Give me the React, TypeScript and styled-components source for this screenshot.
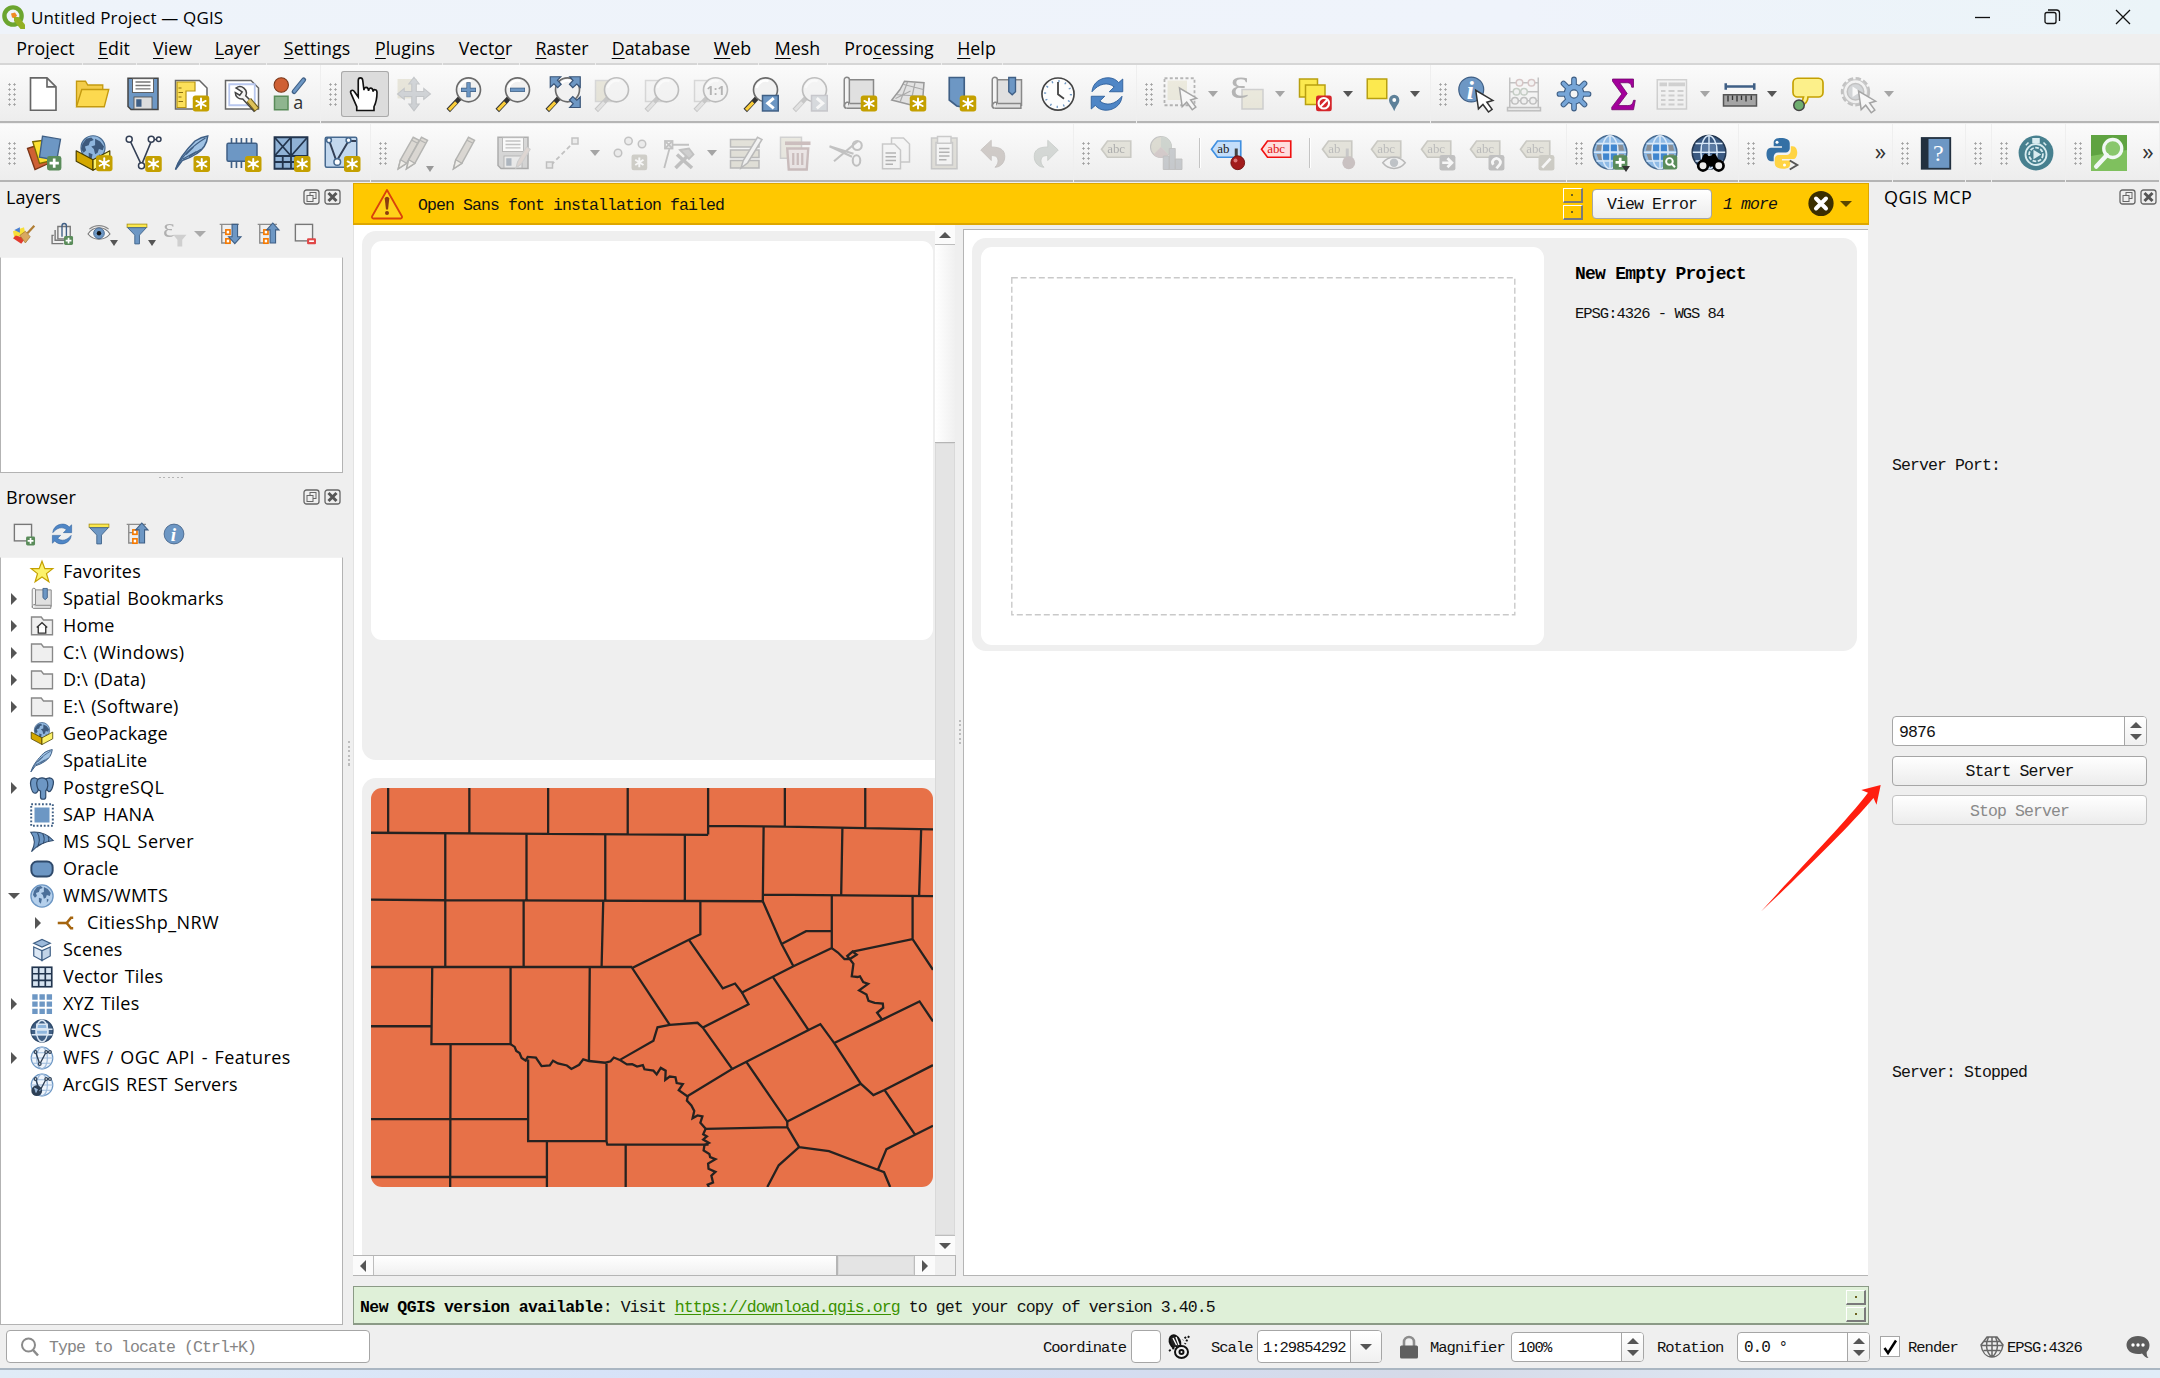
import React from "react";
import styled, { createGlobalStyle, css } from "styled-components";

const Global = createGlobalStyle`
  * { box-sizing: border-box; }
  body { margin: 0; background: #efefef; overflow: hidden; }
  svg { display: block; flex: none; overflow: visible; }
`;

const UI = `"Open Sans", "Noto Sans", "Noto Sans CJK SC", sans-serif`;
const MONO = `"Liberation Mono", "Noto Sans CJK SC", monospace`;

/* ---------- shared text ---------- */

const Mono = styled.span<{ $size?: number; $pitch?: number; $bold?: boolean; $color?: string; $italic?: boolean }>`
  display: inline-block;
  padding-top: 3px;
  font-family: ${MONO};
  font-size: ${(p) => p.$size ?? 16.5}px;
  letter-spacing: ${(p) => (p.$pitch ?? 9) - 0.6 * (p.$size ?? 16.5)}px;
  font-weight: ${(p) => (p.$bold ? 700 : 400)};
  font-style: ${(p) => (p.$italic ? "italic" : "normal")};
  color: ${(p) => p.$color ?? "#111"};
  white-space: pre;
  line-height: 20px;
`;

/* ---------- icon helpers ---------- */

const BLUE = "#6d97c4";
const NAVY = "#3f5f85";

const Star = ({ x = 12.5, y = 13 }: { x?: number; y?: number }) => (
  <g transform={`translate(${x} ${y})`}>
    <rect width="11" height="10.6" rx="1.8" fill="#c4a000" />
    <g stroke="#fff" strokeWidth="1.3" strokeLinecap="round">
      <path d="M5.5 1.9V8.7M2.4 3.6l6.2 3.4M8.6 3.6L2.4 7" />
    </g>
    <circle cx="5.5" cy="5.3" r="1.5" fill="#fff" />
  </g>
);

const Plus = ({ x = 13.5, y = 13.5, s = 1 }: { x?: number; y?: number; s?: number }) => (
  <g transform={`translate(${x} ${y}) scale(${s})`}>
    <rect width="9.6" height="9.6" rx="1.6" fill="#5a8c5a" />
    <path d="M4.8 1.7v6.2M1.7 4.8h6.2" stroke="#fff" strokeWidth="1.8" />
  </g>
);

const Lens = ({ faded = false, children }: { faded?: boolean; children?: React.ReactNode }) => (
  <g>
    <path d="M9.2 14.8L1.5 23" stroke={faded ? "#888" : "#333"} strokeWidth="3.2" />
    <path d="M6.8 17.6L2 22.6" stroke={faded ? "#ccc" : "#fccf3a"} strokeWidth="2" />
    <circle cx="15" cy="9.2" r="8" fill="#f1f1f1" stroke="#6b6b6b" strokeWidth="1.1" />
    <path d="M9 8a6.3 6.3 0 0 1 8-4.6" stroke="#fff" strokeWidth="1.6" fill="none" />
    {children}
  </g>
);

const Cursor = ({ x = 12, y = 9 }: { x?: number; y?: number }) => (
  <path transform={`translate(${x} ${y})`} d="M0 0l1.8 12.4 3-2.9 3.7 5 2.4-1.8-3.5-4.7 4-1.2z" fill="#fff" stroke="#333" strokeWidth="1" />
);

const Book = () => (
  <g stroke="#888" strokeWidth="1">
    <path d="M4.5 2.5H21v17H4.5z" fill="#e0e0e0" />
    <path d="M1.5 2.5a1.7 1.7 0 0 1 3.4 0v15.2a2 2 0 0 0-2 3.8c-1 0-1.9-1-1.4-3z" fill="#f4f4f4" />
    <path d="M3 21.5h17.6v-3.2H5" fill="#e0e0e0" />
  </g>
);

const Tag = ({ fill, stroke, text, color = "#444" }: { fill: string; stroke: string; text: string; color?: string }) => (
  <g transform="translate(0 .5)">
    <path d="M5 3.5h15.5v10.8H5L1 9z" fill={fill} stroke={stroke} strokeWidth="1.1" />
    <text x="4.8" y="11.6" fontFamily="Liberation Serif, serif" fontSize="8.6" fill={color}>
      {text}
    </text>
  </g>
);

const MiniBadge = ({ d, fill = "#888" }: { d: string; fill?: string }) => (
  <g transform="translate(13 13.3)">
    <rect width="10.6" height="10.4" rx="1.6" fill={fill} />
    <path d={d} stroke="#fff" strokeWidth="1.8" fill="none" />
  </g>
);

const Land = ({ c = "#3d5a7d" }: { c?: string }) => (
  <path d="M4 7l3-4 4-1 2 2-3 1-1 3-3 1 1 3-2 2-2-3zM14 3l4 2 3 4-1 3-3-1-1 3-2 1-1-4-2-2 3-1zM9 14l3 1-1 5-2-2zM17 15l2 1-2 3z" fill={c} />
);

const Grid = ({ dark = false }: { dark?: boolean }) => (
  <g fill="none" stroke={dark ? "#22354e" : "#46698f"} strokeWidth="1">
    <circle cx="12" cy="11.5" r="11.2" fill={dark ? "#3b5a82" : "#8fbbe6"} />
    {!dark && <path d="M3.500 6.500h3.700v4H2.500zM17 6.500h3.500l1 4H17zM3 12.600h4v4H4.500zM17 12.600h4.500l-1.500 4H17z" fill="#8a8f95" stroke="none" />}
    <ellipse cx="12" cy="11.5" rx="5.4" ry="11" stroke="#d8e8f8" />
    <path d="M12 .7v21.6M1.2 11.5h21.6M3 5.6h18M3 17.4h18" stroke="#d8e8f8" />
    <path d="M7.4 6.5h4v4.2h-4zM12.600 6.500h4v4.200h-4zM7.400 12.500h4v4h-4zM12.600 12.500h4v4h-4z" fill={dark ? "#5a7aa3" : "#3f86cf"} stroke="none" />
  </g>
);

const Feather = () => (
  <g>
    <path d="M1 23C3 16 8 10 14 4c3-2 6-3 8.5-3.4C22 6 19 10 15 12.5c-3 2-6 3.5-9.500 4.5z" fill="#9fc2e4" stroke="#3f5f85" strokeWidth="1" />
    <path d="M1 23C5 14 11 8 21 2M8 13l5-5M10 14.500l8-5M6 16l9-5" stroke="#3f5f85" strokeWidth=".8" fill="none" />
  </g>
);

const Box3d = () => (
  <g strokeLinejoin="round">
    <circle cx="12" cy="8.500" r="8" fill="#8fb6dd" stroke="#46698f" strokeWidth=".8" />
    <g transform="translate(1.500 0) scale(.85)"><Land /></g>
    <path d="M.8 10.5L12 16.500v7L.8 17.500z" fill="#d4a800" stroke="#4a3f00" strokeWidth=".8" />
    <path d="M23.200 10.500L12 16.500v7l11.200-6z" fill="#fcf26a" stroke="#4a3f00" strokeWidth=".8" />
  </g>
);

const Refresh = () => (
  <g fill="#4f86c6" stroke="#2e5f9b" strokeWidth=".6">
    <path d="M2 10.500C2.300 4.500 8 .8 13.500 1.200c2.600.2 4.800 1.400 6.300 3.200L22.500 2v8.500h-9L16.800 7.300C12.500 3.700 6.500 5 2 10.500z" />
    <path d="M22 13.500c-.3 6-6 9.700-11.500 9.300-2.600-.2-4.800-1.400-6.300-3.200L1.500 22v-8.500h9l-3.300 3.200c4.300 3.600 10.300 2.300 14.800-3.200z" />
  </g>
);

const Pencil = ({ x = 0 }: { x?: number }) => (
  <g transform={`translate(${x} 0)`}>
    <path d="M3 22.500l1.500-6L13 1.500l4 2L8.500 19z" fill="#b9ad98" stroke="#55554c" strokeWidth="1" />
    <path d="M4.500 16.500l4 2.300L3 22.500zM12 3.500l4 2" fill="#efe9d8" stroke="#55554c" strokeWidth=".9" />
  </g>
);

const Floppy = ({ c = BLUE }: { c?: string }) => (
  <g>
    <path d="M2 1.500h20v20.800H4L2 20.300z" fill={c} stroke="#444" strokeWidth="1" />
    <rect x="5" y="1.800" width="14" height="9.200" fill="#fff" stroke="#555" strokeWidth=".6" />
    <path d="M7 4h10M7 6.300h10M7 8.600h10" stroke="#777" strokeWidth=".9" />
    <rect x="6" y="14" width="12" height="8" fill="#ddd" stroke="#555" strokeWidth=".6" />
    <rect x="7.500" y="15.500" width="3.500" height="5" fill="#3f5f85" />
  </g>
);

const Funnel = () => (
  <g>
    <rect x=".8" y=".8" width="14.400" height="2.400" fill="#fce94f" stroke="#a89010" strokeWidth=".6" />
    <path d="M1.200 3.400h13.600L9.800 8.800v6.400H6.400V8.800z" fill={BLUE} stroke="#46698f" strokeWidth=".7" />
  </g>
);

const TreeGlyph = ({ up }: { up: boolean }) => (
  <g>
    <path d="M.5 1h14M2 1v13.500h4M2 7h3" stroke="#8c8c8c" strokeWidth="1" fill="none" />
    <rect x="5" y="5" width="3" height="3.200" fill="#fff" stroke="#f57900" strokeWidth="1.200" />
    <rect x="5" y="11.500" width="3" height="3.200" fill="#fff" stroke="#f57900" strokeWidth="1.200" />
    <path d={up ? "M11.500 0l4.500 5h-2.500v9.500h-4V5H7z" : "M11.500 15l4.500-5h-2.500V1h-4v9H7z"} fill={BLUE} stroke="#3f5f85" strokeWidth=".8" />
  </g>
);

const Folder = () => <path d="M1 2h6.500l1.500 2h6v9.800H1z" fill="#efefef" stroke="#888" strokeWidth=".9" />;

const VGlobe = () => (
  <g fill="none" strokeWidth=".8">
    <circle cx="8" cy="8" r="7.200" fill="#eef4fb" stroke="#6d97c4" />
    <ellipse cx="8" cy="8" rx="3.600" ry="7.200" stroke="#9dbadb" />
    <path d="M.8 8h14.400M2 4.500h12M2 11.500h12" stroke="#9dbadb" />
    <path d="M3.800 4.200L6.500 12 10.500 4.500M11 4h2.500" stroke="#2d3f55" strokeWidth=".9" />
    <g fill="#fff" stroke="#2d3f55"><circle cx="3.700" cy="4" r=".9" /><circle cx="6.500" cy="12" r=".9" /><circle cx="10.800" cy="4" r=".9" /><circle cx="13.300" cy="4" r=".9" /></g>
  </g>
);

/* 24-unit drawings for the main toolbars */
const icons: Record<string, React.ReactNode> = {
  newFile: <path d="M3.500 1.200h11l6 6v15.600h-17zM14.500 1.200v6h6" transform="translate(-.5 0)" fill="#fff" stroke="#666" strokeWidth="1.100" />,
  open: <g stroke="#c49a10" strokeWidth=".9"><path d="M1 20V3.500h6l1.500 2.500h10V9" fill="#f3cc4a" /><path d="M1 20.500l3.500-11.500h18l-3 11.500z" fill="#fcd94f" /></g>,
  save: <Floppy />,
  newLayout: <g><path d="M1 3h16l5 5v14H1z" fill="#fff" stroke="#666" /><path d="M2 4h12v6H8v11H2z" fill="#fce05a" stroke="#b89510" strokeWidth=".8" /><path d="M3 8h2M3 11h3M3 14h2M3 17h3" stroke="#8a7010" strokeWidth=".8" /><Star /></g>,
  layoutMgr: <g><path d="M1 3h17l5 5v14H1z" fill="#fff" stroke="#666" /><path d="M3.500 5.500h17v14h-17z" fill="none" stroke="#b9c8ef" strokeWidth="1.200" /><path d="M8 8a4.300 4.300 0 0 1 6.500 5.200l8 8-2.500 2.300-7.500-8.200A4.300 4.300 0 0 1 7.500 11l3 1.800 1.600-2.200z" fill="#f4f4f4" stroke="#444" strokeWidth="1" /><path d="M16.500 16l5.500 6.500" stroke="#6d5b1c" strokeWidth="4" /><path d="M16.500 16l5.200 6.200" stroke="#ddc15a" strokeWidth="2.600" /></g>,
  style: <g><circle cx="5.500" cy="6" r="4.800" fill="#cf6034" stroke="#7a3517" strokeWidth=".7" /><path d="M14 10.500L20.500 2.500" stroke="#3f5f85" strokeWidth="3.200" strokeLinecap="round" /><path d="M14.200 10.300L20.300 2.700" stroke={BLUE} strokeWidth="1.800" strokeLinecap="round" /><rect x="1" y="13.500" width="9" height="9" fill="#8fb58f" stroke="#5a8c5a" /><text x="13.500" y="22.300" fontFamily="Open Sans, sans-serif" fontSize="12" fill="#333">a</text></g>,
  hand: <path d="M7.500 14L5 10.500c-1.200-1.800-3-.8-2.500.8l4 9.200V23h11.500v-2.500c1.500-3 2-5 2-9.500 0-2.400-2.400-2.400-2.600-.5 0-3-2.900-3.200-3-.6-.2-3-3-3-3.100-.4L10.500 3c-.2-2.300-3-2.300-3 0z" fill="#fff" stroke="#111" strokeWidth="1.100" />,
  pan: <g><rect x="1" y="2" width="13" height="13" fill="#d5cda0" /><path d="M12 .8l3.500 4.500h-2v5h5v-2L23 12l-4.500 3.600v-2h-5v5h2L12 23.200l-3.500-4.600h2v-5h-5v2L1 12l4.500-3.700v2h5v-5h-2z" fill="#97a3af" stroke="#7a858f" strokeWidth=".7" /></g>,
  zoomIn: <Lens><path d="M15 4.200v10M10 9.200h10" stroke={NAVY} strokeWidth="2.800" /><path d="M15 4.600v9.200M10.400 9.200h9.200" stroke={BLUE} strokeWidth="1.800" /></Lens>,
  zoomOut: <Lens><path d="M10 9.200h10" stroke={NAVY} strokeWidth="2.800" /><path d="M10.400 9.200h9.200" stroke={BLUE} strokeWidth="1.800" /></Lens>,
  zoomFull: <g><Lens /><g fill={BLUE} stroke="#3a5578" strokeWidth=".8"><path d="M3.500.5h7L8.300 2.800l2.500 2.700-2.300 2.200L6 5.200 3.500 7.500zM23.500.5v7L21.200 5.300l-2.700 2.500-2.200-2.300L18.700 3 16.500.5zM23.500 21v-7l-2.300 2.200-2.700-2.500-2.200 2.300 2.500 2.500-2.300 2.500z" /></g></g>,
  zoomSel: <g><rect x="1" y="3" width="13" height="14" fill="#d5cda0" stroke="#aaa" /><Lens faded /></g>,
  zoomLayer: <g><rect x="1" y="3" width="13" height="14" fill="#eee" stroke="#aaa" /><Lens faded /></g>,
  zoomNative: <g><rect x="1" y="3" width="10" height="14" fill="#eee" stroke="#aaa" /><Lens faded><text x="9" y="12.500" fontFamily="Open Sans, sans-serif" fontWeight="700" fontSize="8.500" fill="#555">1:1</text></Lens></g>,
  zoomLast: <g><Lens /><rect x="13" y="13" width="10.500" height="10.300" fill={BLUE} stroke={NAVY} /><path d="M20.500 14.800l-4 3.400 4 3.400" stroke="#fff" strokeWidth="2" fill="none" /></g>,
  zoomNext: <g><Lens faded /><rect x="13" y="13" width="10.500" height="10.300" fill="#aab8c6" stroke="#889" /><path d="M16.500 14.800l4 3.400-4 3.400" stroke="#fff" strokeWidth="2" fill="none" /></g>,
  mapView: <g><Book /><Star /></g>,
  view3d: <g><path d="M6 9l3-5.500 13 1-1 13-7 2L.5 16z" fill="#e2e2e2" stroke="#999" /><path d="M4 12.500l17 1M8 5.500l13.500 3.500M11 4L6 17.500M16 4.500l-3 14M3 15l10-5" stroke="#aaa" strokeWidth=".8" fill="none" /><Star /></g>,
  bookmarkNew: <g><path d="M5.500 1h10v20l-5-1-5-4z" fill={BLUE} stroke={NAVY} strokeWidth="1.100" /><Star /></g>,
  bookmarks: <g><Book /><path d="M12.500 1H17v9.500l-2.200 2-2.300-2z" fill={BLUE} stroke={NAVY} strokeWidth=".9" /></g>,
  clock: <g><circle cx="12" cy="12" r="10.700" fill="#fdfdfd" stroke="#444" strokeWidth="1.100" /><circle cx="12" cy="12" r="8.600" fill="none" stroke={BLUE} strokeWidth="1.400" strokeDasharray=".9 3.600" /><path d="M12 4v8.200l4 3" stroke="#444" strokeWidth="1.200" fill="none" /></g>,
  refresh: <Refresh />,
  select: <g><rect x="3" y="3" width="13" height="13" fill="#e0d9a6" /><rect x="1" y="1.500" width="20" height="18" fill="none" stroke="#555" strokeWidth="1.200" strokeDasharray="2 1.500" /><Cursor x={11} y={8} /></g>,
  epsilon: <g><rect x="8" y="9" width="14" height="13" fill="#e0d9a6" stroke="#999" /><text x="0" y="14.500" fontFamily="Liberation Serif, serif" fontSize="30" fill="#555">ε</text></g>,
  deselect: <g><rect x="1" y="2" width="12" height="12" fill="#fce94f" stroke="#b8a010" /><rect x="5" y="6" width="13" height="13" fill="#fce94f" stroke="#b8a010" /><rect x="12" y="13" width="10.500" height="10.500" rx="1.500" fill="#d5252a" /><circle cx="17.200" cy="18.200" r="3.500" fill="none" stroke="#fff" strokeWidth="1.400" /><path d="M19.500 15.800l-4.700 4.800" stroke="#fff" strokeWidth="1.400" /></g>,
  selectLoc: <g><rect x="1.500" y="2" width="13" height="13" fill="#fce94f" stroke="#b8a010" /><path d="M19.500 23.500c-1.500-4-3.500-5-3.500-7.500a3.400 3.400 0 0 1 6.900 0c0 2.500-2 3.500-3.400 7.500z" fill="#5e8199" /><circle cx="19.500" cy="16" r="1.300" fill="#fff" /></g>,
  identify: <g><circle cx="9.500" cy="9" r="8.300" fill={BLUE} stroke={NAVY} strokeWidth=".8" /><text x="6.500" y="15" fontFamily="Liberation Serif, serif" fontStyle="italic" fontWeight="700" fontSize="17" fill="#fff">i</text><Cursor x={12.500} y={9.500} /></g>,
  abacus: <g fill="none" stroke="#777"><path d="M2.500 1v20.500M21.500 1v20.500M2 4.500h20M2 10.500h20M2 16.500h20" /><rect x="1" y="21" width="22" height="2.200" fill="#ddd" /><g fill="#eee"><circle cx="9" cy="4.500" r="2.200" stroke="#b77" /><circle cx="17" cy="4.500" r="2.200" stroke="#b77" /><circle cx="7" cy="10.500" r="2.200" stroke="#797" /><circle cx="12" cy="10.500" r="2.200" stroke="#797" /><circle cx="6" cy="16.500" r="2.200" /><circle cx="12" cy="16.500" r="2.200" /><circle cx="18" cy="16.500" r="2.200" /></g></g>,
  gear: <g><g stroke={NAVY} strokeWidth="3.800" strokeLinecap="round"><path d="M12 2.300v19.400M2.300 12h19.400M5 5l14 14M19 5L5 19" /></g><circle cx="12" cy="12" r="7" fill={NAVY} /><g stroke="#77a6d8" strokeWidth="2.400" strokeLinecap="round"><path d="M12 2.300v19.400M2.300 12h19.400M5 5l14 14M19 5L5 19" /></g><circle cx="12" cy="12" r="6.300" fill="#77a6d8" /><circle cx="12" cy="12" r="2.700" fill="#f4f4f4" stroke={NAVY} strokeWidth=".8" /></g>,
  sigma: <path d="M5 2h14v5.500h-1.200c-.4-2.500-1.300-3-3.500-3H9.800l5 7.200-6 8h6.400c2.500 0 3.200-1 3.800-3.500h1.200L19 22.500H4.500v-1.700l6.700-8.800L5 3.500z" fill="#a3009b" stroke="#6b0066" strokeWidth=".5" />,
  table: <g><rect x="1.500" y="2.500" width="19.500" height="19.500" fill="#eee" stroke="#999" /><path d="M3 5.500h5M9 5.500h11" stroke="#999" strokeWidth="2.500" /><path d="M4 10h3M9 10h4M15 10h4M4 13h3M9 13h4M15 13h4M4 16h3M9 16h4M15 16h4M4 19h3M9 19h4M15 19h4" stroke="#999" strokeWidth="1.200" /></g>,
  measure: <g><path d="M2.500 7h19M2.500 4.800v4.400M21.500 4.800v4.400" stroke="#3f5f85" strokeWidth="1.700" /><rect x="1" y="12.500" width="22" height="7.500" fill="#a5a5a5" stroke="#555" /><path d="M4 13v4M7 13v3M10 13v4M13 13v3M16 13v4M19.500 13v3" stroke="#333" strokeWidth=".9" /></g>,
  tips: <g><path d="M5 1.500h14a3 3 0 0 1 3 3V11a3 3 0 0 1-3 3h-7c0 3-2 5-5 6.500L9 14H5a3 3 0 0 1-3-3V4.500a3 3 0 0 1 3-3z" fill="#fcf08a" stroke="#c4a000" strokeWidth="1.100" /><circle cx="6" cy="19.500" r="3.500" fill="#6fae6f" stroke="#444" /></g>,
  runAction: <g><circle cx="11" cy="10.500" r="8.700" fill="#e9e9e9" stroke="#777" strokeWidth="2.200" strokeDasharray="3.500 1.600" /><circle cx="11" cy="10.500" r="8" fill="#eee" stroke="#888" strokeWidth=".8" /><circle cx="11" cy="10.500" r="5.500" fill="#9fa9b2" stroke="#777" /><path d="M9 7l5.500 3.500L9 14z" fill="#fff" /><Cursor x={13} y={10} /></g>,

  dataSource: <g strokeWidth=".9"><path d="M1 9l9-3 5 13-9 4z" fill="#cf6034" stroke="#7a3517" /><path d="M4.500 4.500l11-1.500 2 14-8.500 2z" fill="#fce02f" stroke="#7d6a00" /><path d="M11 .8l12 2-2.500 14-11.500-2z" fill={BLUE} stroke={NAVY} /><Plus x={14} y={14} /></g>,
  newGpkg: <g><Box3d /><Star x={14} y={13.500} /></g>,
  newShp: <g fill="none" stroke="#333f55"><path d="M3 3l8 17L18 3h4" strokeWidth="1.100" /><g fill="#fff"><circle cx="2.800" cy="2.800" r="2" /><circle cx="11" cy="20.500" r="2" /><circle cx="17.500" cy="2.800" r="2" /><circle cx="22.500" cy="2.800" r="1.500" /></g><g stroke="none"><Star x={13.500} y={14} /></g></g>,
  newLite: <g><Feather /><Star x={13} y={14} /></g>,
  newMem: <g><path d="M5 2v20M8.300 2v20M11.600 2v20M15 2v20M18.300 2v20" stroke="#3f5f85" strokeWidth="1.100" /><rect x="2" y="5.500" width="20" height="12" rx="1" fill={BLUE} stroke={NAVY} /><Star x={14} y={14} /></g>,
  newMesh: <g stroke="#22354e" strokeWidth="1.200"><path d="M1 1.500h22v21H1z" fill="#8fb2d6" /><path d="M12 1.500v21M1 14h22M1 1.500L12 14M12 1.500L1 14M23 1.500L12 14M1 18h22M6.500 14v8.500" fill="none" /><g stroke="none"><Star x={14} y={14} /></g></g>,
  newVirt: <g stroke="#46698f"><rect x="1.500" y="1.500" width="21" height="20" rx="1" fill="#c3d8ee" /><path d="M4 3.500l5 14 8-13.500M17 4h5" fill="none" stroke="#333f55" strokeWidth="1.300" /><g fill="#fff"><circle cx="4" cy="3.500" r="1.600" /><circle cx="9.500" cy="18" r="2.200" /><circle cx="17" cy="3.500" r="1.600" /></g><g stroke="none"><Star x={14} y={14} /></g></g>,
  edits: <g><Pencil x={-1.500} /><Pencil x={4} /></g>,
  edit: <Pencil x={2} />,
  saveEdits: <g><Floppy c="#aaa" /><path d="M14 22l1-4 6-10 2.500 1.500-6 10z" fill="#c9a898" stroke="#999" strokeWidth=".7" /></g>,
  digitize: <g><path d="M4 20L20 4" stroke="#777" strokeWidth="1.200" strokeDasharray="3 2" /><rect x="1" y="18" width="4" height="4" fill="#ddd" stroke="#777" /><rect x="18" y="2" width="4" height="4" fill="#ddd" stroke="#777" /></g>,
  addPts: <g><g fill="#ddd" stroke="#777"><circle cx="4" cy="12" r="2.500" /><circle cx="11" cy="4" r="2.500" /><circle cx="20" cy="6" r="2.500" /></g><rect x="13" y="13" width="10.500" height="10.500" rx="1.500" fill="#9d9880" /><path d="M18.200 15v6.500M15.500 16.500l5.500 3.500M21 16.500L15.500 20" stroke="#fff" strokeWidth="1.300" /></g>,
  vertex: <g stroke="#777" fill="none" strokeWidth="1.200"><rect x="2" y="4" width="5" height="5" /><path d="M7 6.500h11M5 9L1.500 22M2 4l5 5M7 4L2 9" /><path d="M9 22l9-9M10 13l10 9" strokeWidth="2.400" /><path d="M12 10l6-1 3 4-3 3z" fill="#999" /></g>,
  multiEdit: <g><path d="M1 3h19v5H1zM1 10h19v5H1zM1 17h19v5H1z" fill="#c9c2a2" stroke="#666" /><path d="M8 22l1.500-5L19 1.500l3 1.500-9.500 15.500z" fill="#eee" stroke="#666" /></g>,
  trash: <g><rect x="1" y="1.500" width="14" height="14" fill="#d8d2b4" stroke="#999" /><path d="M4 5.500h17" stroke="#a06868" strokeWidth="2.400" /><path d="M5.500 9h14l-1 14h-12z" fill="#e5cfcf" stroke="#a06868" strokeWidth="1.600" /><path d="M9.500 12v8M12.500 12v8M15.500 12v8" stroke="#a06868" strokeWidth="1.500" /></g>,
  cut: <g fill="none" stroke="#777" strokeWidth="1.400"><path d="M1 7.500l16 5M4 17.500L20 4M1 7.500l15 7" /><ellipse cx="19.500" cy="7" rx="3" ry="3" /><ellipse cx="19" cy="17" rx="2.500" ry="3.500" /></g>,
  copy: <g fill="#f4f4f4" stroke="#888"><path d="M9 2h8l4 4v12H9z" /><path d="M3 6h8l4 4v12.500H3z" /><path d="M5 12h7M5 14.500h7M5 17h7M5 19.500h5" stroke="#555" /></g>,
  paste: <g stroke="#888"><rect x="3" y="2" width="17" height="20.500" fill="#c4bfa8" /><rect x="6" y="5" width="11" height="15" fill="#f4f4f4" /><rect x="7" y="1" width="9" height="4.500" fill="#eee" /><path d="M8 9h7M8 11.500h7M8 14h7M8 16.500h5" stroke="#555" /></g>,
  undo: <path d="M2.500 10L9.500 3.500V8c7 0 9 2.500 9 6.500s-3 7-6.500 7c1.500-1.500 2.200-3 2-4.700-.2-2.300-1.500-3.100-4.500-3.100V17z" fill="#a08d80" stroke="#8a7a70" strokeWidth=".6" />,
  redo: <path d="M21.500 10L14.500 3.500V8c-7 0-9 2.500-9 6.500s3 7 6.500 7c-1.500-1.500-2.200-3-2-4.700.2-2.300 1.500-3.100 4.500-3.100V17z" fill="#a0b0a4" stroke="#86968a" strokeWidth=".6" />,
  label: <Tag fill="#cbc6a6" stroke="#8f8c74" text="abc" />,
  diagram: <g><circle cx="8" cy="8" r="7" fill="#b9b48e" stroke="#777" strokeWidth=".7" /><path d="M8 8V1A7 7 0 0 1 13 13z" fill="#8fa48f" /><path d="M8 8l5 5a7 7 0 0 1-10 0z" fill="#b08a8a" /><path d="M9.500 14v9h4v-9zM13.500 9v14h4V9zM17.500 16v7h4.500v-7z" fill="#84909c" stroke="#777" strokeWidth=".6" /></g>,
  pinned: <g><Tag fill="#c4defa" stroke="#3f8fe0" text="ab" color="#222" /><path d="M17.500 9v7" stroke="#444" strokeWidth="2" /><circle cx="18.500" cy="18.500" r="4.600" fill="#a21c1c" stroke="#701010" strokeWidth=".6" /><circle cx="17" cy="17" r="1.300" fill="#d77" /></g>,
  unplaced: <Tag fill="#ffdede" stroke="#f01010" text="abc" color="#e01515" />,
  pinGrey: <g><Tag fill="#cbc6a6" stroke="#8a8870" text="ab" color="#666" /><path d="M17.500 9v7" stroke="#888" strokeWidth="2" /><circle cx="18.500" cy="18.500" r="4.300" fill="#977" /></g>,
  eyeGrey: <g><Tag fill="#cbc6a6" stroke="#8a8870" text="abc" color="#666" /><path d="M8.500 18.500c4-5 11-5 15 0-4 5-11 5-15 0z" fill="#f5f5f5" stroke="#666" /><circle cx="16" cy="18.500" r="2.800" fill="#6f7f8f" /></g>,
  moveGrey: <g><Tag fill="#cbc6a6" stroke="#8a8870" text="abc" color="#666" /><MiniBadge d="M1.800 5.200h6M5.300 2.200l3 3-3 3" fill="#777" /></g>,
  rotGrey: <g><Tag fill="#cbc6a6" stroke="#8a8870" text="abc" color="#666" /><MiniBadge d="M3.200 6.500a2.600 2.600 0 1 1 4.200 0L5.300 9" fill="#777" /></g>,
  editGrey: <g><Tag fill="#cbc6a6" stroke="#8a8870" text="abc" color="#666" /><MiniBadge d="M2.500 8.500l5.500-6" fill="#9a9478" /></g>,
  globeAdd: <g><Grid /><Plus x={14} y={13.500} /></g>,
  globeFind: <g><Grid /><rect x="14" y="13.500" width="9.500" height="9.500" rx="1.500" fill="#5a8c5a" /><circle cx="18.300" cy="17.600" r="2.200" fill="none" stroke="#fff" strokeWidth="1.300" /><path d="M20 19.300l2 2.200" stroke="#fff" strokeWidth="1.400" /></g>,
  binoculars: <g><Grid dark /><path d="M5 21l3-7c.5-2 3-2 3.500 0h2c.5-2 3-2 3.500 0l4 7z" fill="#000" /><circle cx="8" cy="20.500" r="3.200" fill="#eee" stroke="#000" strokeWidth="1.800" /><circle cx="18.500" cy="20.500" r="3.200" fill="#eee" stroke="#000" strokeWidth="1.800" /></g>,
  python: <g><path d="M10.500 2C6 2 5.800 4 5.800 5.500v2h5.500v1H4C1.500 8.500 1 11 1 13s1 4.500 3 4.500h1.800v-2.800c0-1.800 1.200-3 3-3h5c1.500 0 2.700-1.200 2.700-2.700V5.500C16.500 3 14 2 10.500 2z" fill="#3470a5" /><circle cx="8" cy="4.800" r="1" fill="#fff" /><path d="M12 22.500c4 0 4.800-1.500 4.800-3.500v-2h-5.500v-1h7.500c2 0 2.700-2.500 2.700-4.200 0-2-1-4.300-3-4.300h-1.300v2.800c0 1.800-1.200 3-3 3h-5C7.500 13.300 6.500 14.700 6.500 16v3c0 2.300 2 3.500 5.500 3.500z" fill="#ffd444" /><circle cx="13" cy="20" r="1" fill="#fff" /><path d="M16.500 17l5 3-5 3" stroke="#555" strokeWidth="1.300" fill="none" /></g>,
  help: <g><rect x="2.500" y="2" width="19" height="20.500" fill={BLUE} stroke="#22303f" strokeWidth="1.200" /><rect x="2.500" y="2" width="4.500" height="20.500" fill="#22303f" /><text x="10" y="17.500" fontFamily="Liberation Serif, serif" fontSize="16" fill="#fff">?</text></g>,
  timer: <g><circle cx="12" cy="12" r="11.600" fill="#47808f" /><circle cx="12" cy="13" r="7" fill="none" stroke="#d9ecf0" strokeWidth="1.200" /><circle cx="12" cy="13" r="4.600" fill="none" stroke="#d9ecf0" strokeWidth="1.200" strokeDasharray="2.500 1" /><path d="M10.800 10.700l3.700 2.300-3.700 2.300zM10 2.500h4v2.500h-4zM17 5l1.800 1.800M7 5L5.200 6.800" fill="#d9ecf0" stroke="#d9ecf0" /></g>,
  finder: <g><rect x="0" y="0" width="24" height="24" fill="#7fc05e" /><path d="M0 0h24v10L0 14z" fill="#5fa341" /><circle cx="14.500" cy="9" r="6" fill="#89c76c" stroke="#f1f8f4" strokeWidth="2.200" /><path d="M10.500 13.500L3.500 21" stroke="#f1f8f4" strokeWidth="3" strokeLinecap="round" /></g>,
};

/* 16-unit drawings for docks and the browser tree */
const small: Record<string, React.ReactNode> = {
  brush: <g><path d="M0 6l8-3 1 5-8 3z" fill="#f7df3a" /><path d="M0 11l6 4 3-4-7-2z" fill="#e23b2e" /><path d="M1 5l4-2v4z" fill="#4a7fd0" /><path d="M5 9l4-3 3.500 4L9 14.500z" fill="#d9a860" stroke="#a0752f" strokeWidth=".5" /><path d="M10.500 7.500L15.500 2" stroke="#b07d33" strokeWidth="1.600" /></g>,
  addGroup: <g fill="none" stroke="#777"><path d="M2 9H.8v6H9M3 5v7.500h8" /><path d="M5 2.500h9v9H5z" fill="#f2f2f2" /><path d="M8 10V2a1.600 1.600 0 0 1 3.200 0v7.500" stroke={NAVY} /><g stroke="none"><Plus x={9.500} y={9.500} s={0.68} /></g></g>,
  eye: <g><path d="M0 8c4-6 12-6 16 0-4 5-12 5-16 0z" fill="#f7f7f7" stroke="#777" strokeWidth=".8" /><circle cx="8" cy="7.500" r="3.900" fill={BLUE} stroke={NAVY} strokeWidth=".6" /><circle cx="8" cy="7.500" r="1.600" fill="#111" /><path d="M1 4.500C5 1 11 1 15 4.500" stroke="#888" strokeWidth=".8" fill="none" /></g>,
  funnel: <Funnel />,
  epsFilter: <g opacity=".45"><text x="0" y="10" fontFamily="Liberation Serif, serif" fontSize="20" fill="#666">ε</text><path d="M8.500 9h7.500l-2.500 3v4.500h-2.500V12z" fill="#aaa" stroke="#aaa" /></g>,
  expand: <TreeGlyph up={false} />,
  collapse: <TreeGlyph up />,
  removeLayer: <g><rect x="1" y="1" width="12.500" height="12" fill="#f4f4f4" stroke="#777" /><rect x="9.500" y="11" width="6.500" height="4.500" rx=".8" fill="#e04848" /><path d="M11 13.200h3.500" stroke="#fff" strokeWidth="1.200" /></g>,
  addLayer: <g><rect x="1" y="1" width="12.500" height="12" fill="#f4f4f4" stroke="#777" /><Plus x={9.500} y={9.800} s={0.68} /></g>,
  refresh: <g transform="scale(.667)"><Refresh /></g>,
  info: <g><circle cx="8" cy="8" r="7.200" fill={BLUE} stroke={NAVY} strokeWidth=".6" /><text x="5.600" y="12.800" fontFamily="Liberation Serif, serif" fontStyle="italic" fontWeight="700" fontSize="14" fill="#fff">i</text></g>,
  star: <path d="M8 .8l1.900 5h5.300l-4.200 3.300 1.600 5.400L8 11.300l-4.600 3.200L5 9.100.8 5.800h5.300z" fill="#fcf26a" stroke="#c4a000" strokeWidth=".8" />,
  bookmarks: <g transform="translate(.5 .3) scale(.65)"><Book /><path d="M12.500 1H17v9.500l-2.200 2-2.300-2z" fill={BLUE} stroke={NAVY} strokeWidth=".9" /></g>,
  home: <g><Folder /><path d="M4.500 9L8 5.800 11.500 9M5.500 8.500v4.200h5V8.500" fill="#fff" stroke="#333" strokeWidth=".9" /></g>,
  folder: <Folder />,
  gpkg: <g transform="translate(.3 0) scale(.64)"><Box3d /></g>,
  feather: <g transform="scale(.66)"><Feather /></g>,
  elephant: <g fill={BLUE} stroke="#2f4a6b" strokeWidth=".8"><path d="M3 1.200C.5 1.200.1 3.700.5 6.500c.4 2.500 1.500 5 2.800 5S5.500 9.500 5.500 9.500L6 2.500zM13 1.200c2.500 0 2.900 2.500 2.500 4.300-.5 2.500-1.800 5-3 5L10 8V2z" /><path d="M5 2.500C6.500 .8 9.500 .8 11 2.500c1.500 2 1 6-.5 7.500v4c0 1-.8 1.500-1.800 1.500S7 15 7 14v-4C4.500 9.500 4 4.500 5 2.500z" /></g>,
  hana: <g><rect x="3" y="3" width="10" height="10" fill={BLUE} /><rect x=".8" y=".8" width="14.400" height="14.400" fill="none" stroke={NAVY} strokeWidth="1.300" strokeDasharray="1.200 1.200" /></g>,
  mssql: <path d="M.5 1.500c5-.5 11 1 15 5.500-5 .5-10 2.500-14.500 7.500C3.500 10 3.500 5.500.5 1.500zM5 2c1.500 2.500 1.500 6 0 9.500M8.500 2.700c1.300 2 1.300 4 .3 6.500M12 4.300c.8 1.200.8 2.200.3 3.400" fill={BLUE} stroke="#2f4a6b" strokeWidth=".7" />,
  oracle: <rect x=".9" y="3" width="14.200" height="10" rx="3.800" fill={BLUE} stroke="#2f4a6b" strokeWidth="1.300" />,
  wms: <g><circle cx="8" cy="8" r="7.400" fill="#b5d0ec" stroke="#6d97c4" strokeWidth=".9" /><g transform="scale(.66)"><Land c="#4b6f99" /></g></g>,
  plug: <g stroke="#a5650f" strokeWidth="1.700" fill="none"><path d="M2.500 8h6" /><path d="M12.800 4.500h-1.500L8.500 8l2.800 3.500h1.500" /></g>,
  scenes: <g stroke="#3f5f85" strokeWidth=".8"><path d="M2.500 6L8 8.500V15L2.500 12z" fill="#dbe7f4" /><path d="M13.500 6L8 8.500V15l5.500-3z" fill="#c2d4e8" /><path d="M2.500 3.500L8 1l5.500 2.500L8 6z" fill="#9dbadb" /></g>,
  vtiles: <g stroke="#22354e" strokeWidth="1.100"><rect x="1.500" y="1.500" width="13" height="13" fill="#d7e4f1" /><path d="M5.800 1.500v13M10.200 1.500v13M1.500 5.800h13M1.500 10.200h13" /></g>,
  xyz: <path d="M1.500 1.500h3.600v3.600H1.500zM6.300 1.500h3.600v3.600H6.300zM11.100 1.500h3.600v3.600h-3.600zM1.500 6.300h3.600v3.600H1.500zM6.300 6.300h3.600v3.600H6.300zM11.100 6.300h3.600v3.600h-3.600zM1.500 11.100h3.600v3.600H1.500zM6.300 11.100h3.600v3.600H6.300zM11.100 11.100h3.600v3.600h-3.600z" fill={BLUE} />,
  wcs: <g fill="none" stroke="#2f4a6b" strokeWidth=".9"><circle cx="8" cy="8" r="7.300" fill="#3f5f85" /><path d="M4.500 3.500h7v3h-7zM4 7.300h8v3H4z" fill="#8fb6dd" stroke="#dbe7f4" /><ellipse cx="8" cy="8" rx="3.800" ry="7.200" stroke="#dbe7f4" /><path d="M1 6.800h14M1 10.500h14" stroke="#dbe7f4" /></g>,
  wfs: <VGlobe />,
  arcgis: <g><VGlobe /><circle cx="4.500" cy="11.800" r="3.600" fill="#2d3f55" /><path d="M3 10l2 1-1 2zM6 12l1.500-1" fill="#9dbadb" stroke="#9dbadb" strokeWidth=".5" /></g>,
};

/* ---------- title bar and menu ---------- */

const Window = styled.div`
  width: 2160px;
  height: 1378px;
  display: flex;
  flex-direction: column;
  background: #efefef;
  font-family: ${UI};
  color: #000;
  position: relative;
`;

const TitleBar = styled.header`
  height: 34px;
  flex: none;
  display: flex;
  align-items: center;
  gap: 6px;
  padding-left: 2px;
  background: linear-gradient(90deg, #eef3fa, #eff3fb 70%, #ebf4f8);
`;

const TitleText = styled.span`
  font-size: 17px;
  letter-spacing: 0.15px;
  flex: 1;
`;

const WinControls = styled.div`
  display: flex;
  svg { margin-right: 48px; }
  svg:nth-child(2) { margin-right: 53px; }
  svg:last-child { margin-right: 28px; }
`;

const MenuBar = styled.nav`
  height: 31px;
  flex: none;
  display: flex;
`;

const MenuItem = styled.div<{ $w: number }>`
  width: ${(p) => p.$w - 1}px;
  margin-right: 1px;
  padding-left: 9px;
  border-bottom: 2px solid #d6d6d6;
  display: flex;
  align-items: center;
  justify-content: center;
  font-size: 17.800px;
  letter-spacing: 0.05px;
  white-space: pre;
  line-height: 28px;
  padding-bottom: 1px;
  u { text-decoration-thickness: 1px; text-underline-offset: 3px; }
`;

const MenuRest = styled.div`
  flex: 1;
  border-bottom: 2px solid #d6d6d6;
`;

const menus: [string, number, number][] = [
  ["Project", 3, 83], ["Edit", 0, 54], ["View", 0, 63], ["Layer", 0, 67], ["Settings", 0, 92], ["Plugins", 0, 84],
  ["Vector", 4, 77], ["Raster", 0, 76], ["Database", 0, 102], ["Web", 0, 61], ["Mesh", 0, 69], ["Processing", 3, 114], ["Help", 0, 61],
];

/* ---------- toolbars ---------- */

const ToolRow = styled.div<{ $h: number }>`
  height: ${(p) => p.$h}px;
  flex: none;
  display: flex;
  padding-bottom: ${(p) => p.$h - 58}px;
`;

const ToolGroup = styled.div<{ $grow?: boolean; $pad?: number }>`
  display: flex;
  align-items: center;
  flex: ${(p) => (p.$grow ? "1" : "none")};
  padding: 2px ${(p) => p.$pad ?? 3}px 0 0;
  margin-right: 1px;
  background: linear-gradient(#fbfbfb, #ededed);
  border-bottom: 2px solid #b5b5b5;
`;

const Dots = styled.div`
  width: 10px;
  height: 25px;
  margin: 0 2px 0 7px;
  background-image: radial-gradient(circle, #a0a0a0 0.9px, transparent 1.300px);
  background-size: 5px 5px;
`;

const Grip = styled.div`
  width: 20px;
  display: flex;
  flex: none;
`;

const ToolSlot = styled.div<{ $on?: boolean; $off?: boolean; $w?: number }>`
  width: ${(p) => p.$w ?? 49.5}px;
  height: 46px;
  flex: none;
  display: flex;
  align-items: center;
  padding-left: 5.500px;
  position: relative;
  ${(p) => p.$off && css`> svg { opacity: 0.4; filter: saturate(0.6); }`}
  ${(p) => p.$on && css`background: #dcdcdc; box-shadow: inset 0 0 0 1px #a9a9a9; border-radius: 3px; width: 47.500px; margin-right: 2px;`}
`;

const Caret = styled.i<{ $c?: string; $w?: number; $up?: boolean }>`
  flex: none;
  width: 0;
  height: 0;
  border: ${(p) => (p.$w ?? 12) / 2}px solid transparent;
  border-top: ${(p) => (p.$up ? "0" : `6px solid ${p.$c ?? "#555"}`)};
  border-bottom: ${(p) => (p.$up ? `6px solid ${p.$c ?? "#555"}` : "0")};
`;

const SideCaret = styled(Caret)`
  margin-left: 9px;
`;

const CornerCaret = styled(Caret)`
  position: absolute;
  right: 6px;
  bottom: 4px;
`;

const Divider = styled.div`
  width: 2px;
  height: 30px;
  margin: 0 4px 0 5.500px;
  background: linear-gradient(90deg, #c4c4c4 50%, #fff 50%);
  flex: none;
`;

const More = styled.span`
  font-size: 23px;
  line-height: 20px;
  width: 24px;
  text-align: center;
  padding: 0 0 5px 2px;
  color: #333;
`;

type ToolDef = { n: string; off?: boolean; on?: boolean; drop?: boolean; corner?: boolean };
/* "-name" is disabled, "+name" is pressed, a trailing ">" adds a drop-down, "." a corner arrow */
const parse = (s: string): ToolDef => ({
  n: s.replace(/[-+>.]/g, ""),
  off: s[0] === "-",
  on: s[0] === "+",
  drop: s.endsWith(">"),
  corner: s.endsWith("."),
});

const Tools = ({ list }: { list: string }) => (
  <>
    {list.split(" ").map((s, i) => {
      if (s === "|") return <Divider key={i} />;
      const t = parse(s);
      return (
        <ToolSlot key={i} $on={t.on} $off={t.off} $w={t.drop ? 67.5 : undefined}>
          <svg width="36" height="36" viewBox="0 0 24 24">{icons[t.n]}</svg>
          {t.drop && <SideCaret $w={11} $c={t.off ? "#a5a5a5" : "#555"} />}
          {t.corner && <CornerCaret $w={9} $c={t.off ? "#999" : "#333"} />}
        </ToolSlot>
      );
    })}
  </>
);

const Handle = () => <Grip><Dots /></Grip>;

/* ---------- docks ---------- */

const Main = styled.main`
  flex: 1;
  min-height: 0;
  display: grid;
  grid-template-columns: 344px 9px 1516px 291px;
`;

const Dock = styled.section`
  display: flex;
  flex-direction: column;
  min-height: 0;
`;

const DockTitle = styled.div<{ $pl?: number; $pr?: number }>`
  height: 30px;
  flex: none;
  display: flex;
  align-items: center;
  gap: 4px;
  padding: 0 ${(p) => p.$pr ?? 3}px 0 ${(p) => p.$pl ?? 6}px;
  font-size: 18px;
  span { flex: 1; }
`;

const McpTitle = styled(DockTitle)`
  padding-left: 15px;
  letter-spacing: 0.4px;
`;

const DockTools = styled.div`
  height: 45px;
  flex: none;
  display: flex;
  align-items: center;
  padding: 0 0 2px 5.500px;
`;

const DockSlot = styled.div<{ $w?: number }>`
  width: ${(p) => p.$w ?? 37.5}px;
  display: flex;
  align-items: center;
  padding-left: 7.500px;
  position: relative;
`;

const SlotCaret = styled(Caret)`
  position: absolute;
  right: 0;
  bottom: -1px;
`;

const LayerTree = styled.div`
  height: 216px;
  width: 343px;
  flex: none;
  background: #fff;
  border: 1px solid #b3b3b3;
  border-top-color: #f2f2f2;
`;

const HSplit = styled.div`
  height: 9px;
  display: flex;
  align-items: center;
  justify-content: center;
  &::after {
    content: "";
    width: 26px;
    height: 1px;
    background: repeating-linear-gradient(90deg, #b5b5b5 0 2px, transparent 2px 4.500px);
  }
`;

const VSplit = styled.div<{ $w?: number; $up?: number }>`
  width: ${(p) => p.$w ?? 9}px;
  padding-bottom: ${(p) => p.$up ?? 0}px;
  display: flex;
  align-items: center;
  justify-content: center;
  flex: none;
  &::after {
    content: "";
    width: 2px;
    height: 26px;
    background: repeating-linear-gradient(#bdbdbd 0 2px, transparent 2px 4.500px);
  }
`;

const BrowserTree = styled(LayerTree)`
  height: auto;
  flex: 1;
  margin-bottom: 1px;
`;

const TreeRow = styled.div<{ $child?: boolean }>`
  height: 27px;
  display: flex;
  align-items: center;
  padding-left: ${(p) => (p.$child ? 31 : 7)}px;
  font-size: 18px;
  letter-spacing: 0.2px;
  word-spacing: 1.500px;
  line-height: 27px;
  white-space: pre;
  svg { margin-right: 9px; }
`;

const Wide = styled.span`
  letter-spacing: 0.42px;
`;

const Twist = styled.div`
  width: 22px;
  flex: none;
  display: flex;
`;

const RightCaret = styled.i`
  margin-left: 3px;
  border: 6px solid transparent;
  border-left-color: #555;
  border-right: 0;
`;

const treeRows: { t: string; i: string; a?: string; child?: boolean; wide?: boolean }[] = [
  { t: "Favorites", i: "star" }, { t: "Spatial Bookmarks", i: "bookmarks", a: "r" }, { t: "Home", i: "home", a: "r" },
  { t: "C:\\ (Windows)", i: "folder", a: "r", wide: true }, { t: "D:\\ (Data)", i: "folder", a: "r" }, { t: "E:\\ (Software)", i: "folder", a: "r" },
  { t: "GeoPackage", i: "gpkg" }, { t: "SpatiaLite", i: "feather" }, { t: "PostgreSQL", i: "elephant", a: "r", wide: true },
  { t: "SAP HANA", i: "hana", wide: true }, { t: "MS SQL Server", i: "mssql", wide: true }, { t: "Oracle", i: "oracle" }, { t: "WMS/WMTS", i: "wms", a: "d", wide: true },
  { t: "CitiesShp_NRW", i: "plug", a: "r", child: true, wide: true }, { t: "Scenes", i: "scenes" }, { t: "Vector Tiles", i: "vtiles" },
  { t: "XYZ Tiles", i: "xyz", a: "r" }, { t: "WCS", i: "wcs", wide: true }, { t: "WFS / OGC API - Features", i: "wfs", a: "r", wide: true },
  { t: "ArcGIS REST Servers", i: "arcgis" },
];

const DockButtons = () => (
  <>
    <svg width="17" height="16" viewBox="0 0 17 16" fill="none" stroke="#666">
      <rect x="1" y="1" width="15" height="14" rx="2.500" strokeWidth="1.300" />
      <rect x="7" y="3.500" width="6" height="6" /><rect x="4" y="6.500" width="6" height="6" fill="#efefef" />
    </svg>
    <svg width="17" height="16" viewBox="0 0 17 16" fill="none" stroke="#666">
      <rect x="1" y="1" width="15" height="14" rx="2.500" strokeWidth="1.300" />
      <path d="M4.500 4l8 8M12.500 4l-8 8" strokeWidth="3" stroke="#555" />
    </svg>
  </>
);

const SmallTool = ({ n, w, corner, drop }: { n: string; w?: number; corner?: boolean; drop?: boolean }) => (
  <DockSlot $w={w}>
    <svg width="22" height="22" viewBox="0 0 16 16">{small[n]}</svg>
    {corner && <SlotCaret $w={8} />}
    {drop && <SideCaret $c="#aaa" />}
  </DockSlot>
);

/* ---------- centre ---------- */

const Centre = styled.section`
  display: flex;
  flex-direction: column;
  padding-top: 1px;
  min-width: 0;
  min-height: 0;
`;

const Warning = styled.div`
  height: 42px;
  flex: none;
  display: flex;
  align-items: center;
  background: #ffc800;
  border: 1px solid #dea700;
  border-bottom-width: 2px;
  padding: 0 16px 0 16px;
`;

const WarnText = styled(Mono)`
  flex: 1;
  margin-left: 14px;
  padding-top: 4px;
`;

const StepBtns = styled.div`
  display: flex;
  flex-direction: column;
  gap: 2px;
`;

const StepBtn = styled.div`
  width: 20px;
  height: 15px;
  border: 1px solid #fff;
  border-right: 2px solid #7a7a7a;
  border-bottom: 2px solid #7a7a7a;
  display: flex;
  align-items: center;
  justify-content: center;
  &::after { content: ""; width: 2px; height: 2px; background: #6d6320; }
`;

const Button = styled.button<{ $w?: string; $off?: boolean }>`
  width: ${(p) => p.$w ?? "auto"};
  height: 30px;
  flex: none;
  padding: 0;
  display: flex;
  align-items: center;
  justify-content: center;
  border: 1px solid ${(p) => (p.$off ? "#c2c2c2" : "#a6a6a6")};
  border-radius: 4px;
  background: linear-gradient(#fff, #ececec);
`;

const ErrorButton = styled(Button)`
  width: 120px;
  margin-left: 9px;
`;

const MoreText = styled(Mono)`
  margin: 0 31px 0 11px;
`;

const CloseCaret = styled(Caret)`
  margin-left: 6px;
`;

const Canvas = styled.div`
  height: 1051px;
  flex: none;
  display: flex;
`;

const NewsPane = styled.div`
  width: 603px;
  flex: none;
  display: grid;
  grid-template-columns: 582px 21px;
  grid-template-rows: 1030px 21px;
`;

const NewsList = styled.div`
  background: #fff;
  overflow: hidden;
  display: flex;
  flex-direction: column;
  gap: 18px;
  padding: 6px 0 0 8px;
  border-left: 1px solid #e2e2e2;
`;

const NewsCard = styled.div`
  height: 529px;
  width: 640px;
  flex: none;
  padding: 10px 0 0 9px;
  border-radius: 14px;
  background: #efefef;
`;

const Blank = styled.div`
  width: 562px;
  height: 399px;
  border-radius: 11px;
  background: #fff;
`;

const CountyMap = styled.svg`
  width: 562px;
  height: 399px;
  border-radius: 11px;
  overflow: hidden;
  background: #e77148;
`;

const VBar = styled.div`
  display: flex;
  flex-direction: column;
  width: 20px;
`;

const HBar = styled.div`
  display: flex;
  border-top: 1px solid #b5b5b5;
  border-bottom: 1px solid #b5b5b5;
`;

const BarEnd = styled.div<{ $v?: boolean; $first?: boolean }>`
  ${(p) => (p.$v ? "height: 20px;" : "width: 21px;")}
  flex: none;
  display: flex;
  align-items: center;
  justify-content: center;
  background: #fbfbfb;
  ${(p) => (p.$v ? (p.$first ? "border-bottom" : "border-top") : p.$first ? "border-right" : "border-left")}: 1px solid #bdbdbd;
`;

const VThumb = styled.div`
  height: 198px;
  border-bottom: 1px solid #b5b5b5;
  background: linear-gradient(90deg, #fff, #f0f0f0);
`;

const HThumb = styled.div`
  width: 464px;
  border-right: 2px solid #b5b5b5;
  background: linear-gradient(#fff, #f0f0f0);
`;

const Track = styled.div`
  flex: 1;
  background: #e4e4e4;
  box-shadow: inset 0 0 0 1px #d9d9d9;
`;

const Corner = styled.div`
  border: 1px solid #b5b5b5;
  border-left: 0;
`;

const LeftCaret = styled.i`
  border: 6px solid transparent;
  border-right-color: #555;
  border-left: 0;
`;

const EndCaret = styled(RightCaret)`
  margin-left: 0;
`;

const ProjectPane = styled.div`
  width: 905px;
  margin-top: 4px;
  border: 1px solid #b5b5b5;
  border-right: 0;
  background: #fff;
  padding: 8px 0 0 8px;
`;

const ProjectCard = styled.div`
  width: 885px;
  height: 413px;
  display: flex;
  background: #efefef;
  border-radius: 14px;
  padding: 9px 0 0 9px;
`;

const Preview = styled.div`
  width: 563px;
  height: 398px;
  border-radius: 11px;
  background: #fff;
  padding: 30px 0 0 30px;
`;

const ProjectInfo = styled.div`
  display: flex;
  flex-direction: column;
  gap: 17px;
  padding: 14px 0 0 31px;
`;

const Notice = styled.div`
  height: 39px;
  margin-top: 10px;
  flex: none;
  display: flex;
  align-items: center;
  background: #dff0d8;
  border: 1px solid #8b9a86;
  border-bottom-width: 2px;
  padding: 2px 2px 0 6px;
`;

const NoticeText = styled.div`
  flex: 1;
  white-space: pre;
  display: flex;
`;

const Link = styled(Mono)`
  color: #3a9100;
  text-decoration: underline;
  text-underline-offset: 2px;
`;

/* ---------- server panel ---------- */

const PanelBody = styled.div`
  flex: 1;
  display: flex;
  flex-direction: column;
  padding: 0 13px 0 23px;
`;

const PanelLabel = styled.div`
  height: 504px;
  flex: none;
  display: flex;
  align-items: center;
`;

const StateLabel = styled(PanelLabel)`
  height: auto;
  flex: 1;
  padding-bottom: 9px;
`;

const Form = styled.div`
  display: flex;
  flex-direction: column;
  gap: 9.500px;
`;

const Field = styled.div<{ $w?: number; $h?: number }>`
  width: ${(p) => (p.$w ? p.$w + "px" : "100%")};
  height: ${(p) => p.$h ?? 30}px;
  flex: none;
  display: flex;
  align-items: stretch;
  background: #fff;
  border: 1px solid #a6a6a6;
  border-radius: 4px;
  overflow: hidden;
`;

const FieldText = styled.div<{ $pl?: number }>`
  flex: 1;
  display: flex;
  align-items: center;
  gap: 8px;
  padding-left: ${(p) => p.$pl ?? 6}px;
`;

const Spinner = styled.div<{ $w?: number }>`
  width: ${(p) => p.$w ?? 22}px;
  border-left: 1px solid #a6a6a6;
  background: linear-gradient(#fff, #f0f0f0);
  display: flex;
  flex-direction: column;
  align-items: center;
  justify-content: center;
  gap: 6px;
`;

/* ---------- status bar ---------- */

const Status = styled.footer`
  height: 42px;
  flex: none;
  display: flex;
  align-items: center;
  padding: 0 10px 1px 6px;
`;

const Item = styled.div<{ $w: number }>`
  width: ${(p) => p.$w}px;
  flex: none;
  display: flex;
  align-items: center;
`;

const Push = styled.div`
  flex: 1;
`;

const Check = styled.div`
  width: 20px;
  height: 21px;
  margin-right: 8px;
  border: 1px solid #a6a6a6;
  background: #fff;
  display: flex;
  align-items: center;
  justify-content: center;
`;

const Desktop = styled.div`
  height: 10px;
  flex: none;
  border-top: 2px solid #aab6c2;
  background: linear-gradient(90deg, #e0ecf7, #d3dff8 40%, #d5dae8 66%, #dfe9f5 85%, #e0edf8);
`;

const Annotation = styled.svg`
  position: absolute;
  left: 1755px;
  top: 780px;
`;

const paths = [
  "M76 214L902 220M902 84V219M705 84V218M510 84V216M317 84V215M118 84V214M902 194L1090 196L1453 204M1090 84V196M1287 84V200",
  "M258 216V604M457 218V410M650 218V411M845 219V411M76 408L258 410L1036 413M1038 197L1036 413M1036 394L1453 398M1231 201L1228 397M1424 204L1419 397",
  "M450 412V604M645 413L641 604M76 604H716M883 413V509L855 525L716 607L808 772M855 525L938 666L968 652L985 678L1111 602L1205 549V398M1036 413L1082 537L1111 602M1082 537L1142 500H1205",
  "M1403 398V523L1256 559M1403 523L1453 612M985 678L1001 712L889 780L876 766L808 772L778 779L768 818L687 873M889 780L961 900L850 980",
  "M1060 632L1148 787L961 900M1148 787L1177 770L1211 825L1330 756L1420 704L1453 762M1211 825L1276 943L1307 976L1334 961L1453 889M1276 943L1096 1053L996 880",
  "M226 606L224 828H418V606M612 606L610 875M76 776H224M271 828L270 1243M76 1046H461M461 873V1110H653V885M653 1110L655 1120H903M507 1112V1243M76 1214H507M700 1121V1243",
  "M896 1074L1096 1069V1053M1096 1069L1125 1127L1075 1180L1047 1243M1125 1127L1198 1139L1318 1193L1339 1133L1409 1091L1453 1065M1334 961L1409 1091M1318 1193L1333 1200L1348 1243",
  "M418 828L428 836L432 848L440 854L445 868L455 876L460 865L480 867L494 892L514 890L522 876L534 884L556 890L567 900L586 888L596 872L610 877L650 882L663 878L671 867L687 875L703 887L716 886L728 893L742 889L746 901L768 905L776 916L786 897L798 905L797 932L808 922L822 924L825 941L840 944L830 962L852 980L850 992L861 1006L868 1022L864 1043L876 1035L888 1038L883 1056L896 1074L890 1090L899 1096L890 1105L904 1115L893 1121L891 1137L905 1147L907 1156L920 1162L902 1175L903 1190L920 1199L910 1210L914 1230L901 1236L904 1243",
  "M1205 549L1220 562L1236 581L1250 580L1266 568L1256 559L1243 572L1258 595L1254 631L1268 633L1274 631L1282 648L1294 653L1272 672L1290 684L1295 702L1310 708L1330 710L1331 722L1316 737L1328 756",
];

export default function App() {
  return (
    <Window>
      <Global />
      <TitleBar>
        <svg width="23" height="24" viewBox="0 0 23 24">
          <circle cx="11" cy="11" r="8.600" fill="none" stroke="#6ba52f" strokeWidth="4.400" />
          <path d="M9 8.500l4-1 2 3-2 3-3-1z" fill="#f08a24" />
          <path d="M12 12h4.500l6.500 7.500V24h-4.500L12 16z" fill="#93b023" />
        </svg>
        <TitleText>Untitled Project — QGIS</TitleText>
        <WinControls>
          <svg width="24" height="18" viewBox="0 0 24 18" stroke="#111" strokeWidth="1.300"><path d="M4 9.500h15" /></svg>
          <svg width="18" height="18" viewBox="0 0 18 18" fill="none" stroke="#111" strokeWidth="1.300"><rect x="2" y="4.500" width="11" height="11" rx="2" /><path d="M5 2h8.500a3 3 0 0 1 3 3v8" /></svg>
          <svg width="18" height="18" viewBox="0 0 18 18" stroke="#111" strokeWidth="1.300"><path d="M2 2l14 14M16 2L2 16" /></svg>
        </WinControls>
      </TitleBar>

      <MenuBar>
        {menus.map(([t, u, w]) => (
          <MenuItem key={t} $w={w}>
            <span>{t.slice(0, u)}<u>{t[u]}</u>{t.slice(u + 1)}</span>
          </MenuItem>
        ))}
        <MenuRest />
      </MenuBar>

      <ToolRow $h={59}>
        <ToolGroup><Handle /><Tools list="newFile open save newLayout layoutMgr style" /></ToolGroup>
        <ToolGroup><Handle /><Tools list="+hand -pan zoomIn zoomOut zoomFull -zoomSel -zoomLayer -zoomNative zoomLast -zoomNext mapView view3d bookmarkNew bookmarks clock refresh" /></ToolGroup>
        <ToolGroup><Handle /><Tools list="-select> -epsilon> deselect> selectLoc>" /></ToolGroup>
        <ToolGroup $grow><Handle /><Tools list="identify -abacus gear sigma -table> measure> tips -runAction>" /></ToolGroup>
      </ToolRow>

      <ToolRow $h={58}>
        <ToolGroup><Handle /><Tools list="dataSource newGpkg newShp newLite newMem newMesh newVirt" /></ToolGroup>
        <ToolGroup><Handle /><Tools list="-edits. -edit -saveEdits -digitize> -addPts -vertex> -multiEdit -trash -cut -copy -paste -undo -redo" /></ToolGroup>
        <ToolGroup><Handle /><Tools list="-label -diagram | pinned unplaced | -pinGrey -eyeGrey -moveGrey -rotGrey -editGrey" /></ToolGroup>
        <ToolGroup><Handle /><Tools list="globeAdd. globeFind binoculars" /></ToolGroup>
        <ToolGroup $grow $pad={0}><Handle /><Tools list="python" /><Push /><More>»</More></ToolGroup>
        <ToolGroup><Handle /><Tools list="help" /></ToolGroup>
        <ToolGroup $pad={5}><Handle /></ToolGroup>
        <ToolGroup><Handle /><Tools list="timer" /></ToolGroup>
        <ToolGroup $pad={0}><Handle /><Tools list="finder" /><More>»</More></ToolGroup>
      </ToolRow>

      <Main>
        <Dock>
          <DockTitle><span>Layers</span><DockButtons /></DockTitle>
          <DockTools>
            <SmallTool n="brush" /><SmallTool n="addGroup" /><SmallTool n="eye" corner /><SmallTool n="funnel" corner />
            <SmallTool n="epsFilter" w={56} drop /><SmallTool n="expand" /><SmallTool n="collapse" /><SmallTool n="removeLayer" />
          </DockTools>
          <LayerTree />
          <HSplit />
          <DockTitle><span>Browser</span><DockButtons /></DockTitle>
          <DockTools>
            <SmallTool n="addLayer" /><SmallTool n="refresh" /><SmallTool n="funnel" /><SmallTool n="collapse" /><SmallTool n="info" />
          </DockTools>
          <BrowserTree>
            {treeRows.map((r) => (
              <TreeRow key={r.t} $child={r.child}>
                <Twist>{r.a === "r" && <RightCaret />}{r.a === "d" && <Caret />}</Twist>
                <svg width="24" height="24" viewBox="0 0 16 16">{small[r.i]}</svg>
                {r.wide ? <Wide>{r.t}</Wide> : <span>{r.t}</span>}
              </TreeRow>
            ))}
          </BrowserTree>
        </Dock>

        <VSplit />

        <Centre>
          <Warning>
            <svg width="34" height="32" viewBox="0 0 34 32">
              <path d="M17 2L32 28.500a1.500 1.500 0 0 1-1.300 2H3.300A1.500 1.500 0 0 1 2 28.500z" fill="#ffd21a" stroke="#d9420b" strokeWidth="1.800" strokeLinejoin="round" />
              <path d="M14.700 10.500a2.400 2.400 0 0 1 4.600 0L18 21.500h-2z" fill="#8b3d10" /><circle cx="17" cy="25" r="2" fill="#8b3d10" />
            </svg>
            <WarnText>Open Sans font installation failed</WarnText>
            <StepBtns><StepBtn /><StepBtn /></StepBtns>
            <ErrorButton><Mono>View Error</Mono></ErrorButton>
            <MoreText $italic>1 more</MoreText>
            <svg width="26" height="26" viewBox="0 0 26 26"><circle cx="13" cy="12.500" r="12.600" fill="#3b2f00" /><path d="M8 7.500l10 10M18 7.500l-10 10" stroke="#fff" strokeWidth="4" strokeLinecap="round" /></svg>
            <CloseCaret $c="#5a4600" />
          </Warning>

          <Canvas>
            <NewsPane>
              <NewsList>
                <NewsCard><Blank /></NewsCard>
                <NewsCard>
                  <CountyMap viewBox="76 84 1377 1159" preserveAspectRatio="none" fill="none" stroke="#262220" strokeWidth="2.300">
                    {paths.map((d) => <path key={d} d={d} vectorEffect="non-scaling-stroke" />)}
                  </CountyMap>
                </NewsCard>
              </NewsList>
              <VBar>
                <BarEnd $v $first><Caret $up /></BarEnd>
                <VThumb />
                <Track />
                <BarEnd $v><Caret /></BarEnd>
              </VBar>
              <HBar>
                <BarEnd $first><LeftCaret /></BarEnd>
                <HThumb />
                <Track />
                <BarEnd><EndCaret /></BarEnd>
              </HBar>
              <Corner />
            </NewsPane>
            <VSplit $w={7} $up={36} />
            <ProjectPane>
              <ProjectCard>
                <Preview>
                  <svg width="505" height="339" viewBox="0 0 505 339" fill="none" stroke="#c9c9c9" strokeWidth="1.400">
                    <rect x=".8" y=".8" width="503" height="337" strokeDasharray="6 3" />
                  </svg>
                </Preview>
                <ProjectInfo>
                  <Mono $bold $size={18} $pitch={10.05} $color="#000">New Empty Project</Mono>
                  <Mono $size={15.5} $pitch={8.28}>EPSG:4326 - WGS 84</Mono>
                </ProjectInfo>
              </ProjectCard>
            </ProjectPane>
          </Canvas>

          <Notice>
            <NoticeText>
              <Mono $bold $pitch={9.33} $color="#000">New QGIS version available</Mono>
              <Mono>: Visit </Mono>
              <Link>https://download.qgis.org</Link>
              <Mono> to get your copy of version 3.40.5</Mono>
            </NoticeText>
            <StepBtns><StepBtn /><StepBtn /></StepBtns>
          </Notice>
        </Centre>

        <Dock>
          <McpTitle><span>QGIS MCP</span><DockButtons /></McpTitle>
          <PanelBody>
            <PanelLabel><Mono>Server Port:</Mono></PanelLabel>
            <Form>
              <Field><FieldText><Mono>9876</Mono></FieldText><Spinner><Caret $up /><Caret /></Spinner></Field>
              <Button $w="100%"><Mono>Start Server</Mono></Button>
              <Button $w="100%" $off><Mono $color="#8a8a8a">Stop Server</Mono></Button>
            </Form>
            <StateLabel><Mono>Server: Stopped</Mono></StateLabel>
          </PanelBody>
        </Dock>
      </Main>

      <Status>
        <Field $w={364} $h={33}>
          <FieldText $pl={12}>
            <svg width="22" height="22" viewBox="0 0 22 22" fill="none" stroke="#8a8a8a" strokeWidth="2"><circle cx="9.500" cy="9" r="6.500" /><path d="M14 14l5 5.500" strokeWidth="2.600" /></svg>
            <Mono $color="#858585">Type to locate (Ctrl+K)</Mono>
          </FieldText>
        </Field>
        <Push />
        <Item $w={88}><Mono $size={15.5} $pitch={8.3}>Coordinate</Mono></Item>
        <Item $w={35}><Field $w={30} $h={33} /></Item>
        <Item $w={45}>
          <svg width="26" height="26" viewBox="0 0 26 26" fill="#f3f3f3" stroke="#111" strokeWidth="2">
            <ellipse cx="9" cy="8" rx="5" ry="7" transform="rotate(-25 9 8)" fill="#222" /><path d="M7 4l4 8M10 3l3 8" stroke="#fff" strokeWidth="1.400" />
            <path d="M3 17l8-5 6 2M20 3l-3 3M23 2l-4 8" strokeDasharray="2 2" /><ellipse cx="15.500" cy="18" rx="6.500" ry="6" /><circle cx="15.500" cy="18" r="2" />
          </svg>
        </Item>
        <Item $w={46}><Mono $size={15.5} $pitch={8.3}>Scale</Mono></Item>
        <Item $w={142}>
          <Field $w={125} $h={33}><FieldText $pl={5}><Mono $size={15.5} $pitch={8.25}>1:29854292</Mono></FieldText><Spinner $w={31}><Caret /></Spinner></Field>
        </Item>
        <Item $w={31}>
          <svg width="20" height="26" viewBox="0 0 20 26"><path d="M5 12V8a5 5 0 0 1 10 0v4" fill="none" stroke="#8c8c8c" strokeWidth="2.600" /><rect x="1" y="11.500" width="18" height="13" rx="1.500" fill="#5f5f5f" /></svg>
        </Item>
        <Item $w={81}><Mono $size={15.5} $pitch={8.3}>Magnifier</Mono></Item>
        <Item $w={146}>
          <Field $w={133}><FieldText><Mono $size={15.5} $pitch={8.3}>100%</Mono></FieldText><Spinner><Caret $up /><Caret /></Spinner></Field>
        </Item>
        <Item $w={80}><Mono $size={15.5} $pitch={8.3}>Rotation</Mono></Item>
        <Item $w={143}>
          <Field $w={133}><FieldText><Mono $size={16} $pitch={8.6}>0.0 °</Mono></FieldText><Spinner><Caret $up /><Caret /></Spinner></Field>
        </Item>
        <Item $w={100}>
          <Check><svg width="15" height="16" viewBox="0 0 15 16"><path d="M1.500 9l3.500 5L13 1.500" fill="none" stroke="#000" strokeWidth="2.500" /></svg></Check>
          <Mono $size={15.5} $pitch={8.3}>Render</Mono>
        </Item>
        <Item $w={27}>
          <svg width="24" height="22" viewBox="0 0 24 22" fill="none" stroke="#666" strokeWidth="1.500">
            <path d="M7 1h10l6 8c-1 7-5 12-11 12S2 16 1 9zM1 9.500h22M3.500 14.500h17M4 5.500h16M12 1v20M8.500 1c-3 6-3 14 3 20M15.500 1c3 6 3 14-3 20" />
          </svg>
        </Item>
        <Item $w={119}><Mono $size={15.5} $pitch={8.3}>EPSG:4326</Mono></Item>
        <svg width="24" height="24" viewBox="0 0 24 24"><path d="M12 1C5 1 .5 5 .5 10S5 19 12 19c1.500 0 3-.2 4-.6 2 2.800 4 4.400 6.500 4.600-1.500-1.500-2-3.500-1.800-6C22.500 15 23.500 13 23.500 10 23.500 5 19 1 12 1z" fill="#5c5c5c" /><g fill="#fff"><circle cx="7" cy="10" r="1.700" /><circle cx="12" cy="10" r="1.700" /><circle cx="17" cy="10" r="1.700" /></g></svg>
      </Status>
      <Desktop />

      <Annotation width="130" height="136" viewBox="1755 780 130 136">
        <path d="M1880.700 785L1861.300 790L1868 792.700C1845 823 1800 868 1761 911.500C1802 873 1848 828 1873.500 798L1876.500 804.700z" fill="#ff1e0f" />
      </Annotation>
    </Window>
  );
}
